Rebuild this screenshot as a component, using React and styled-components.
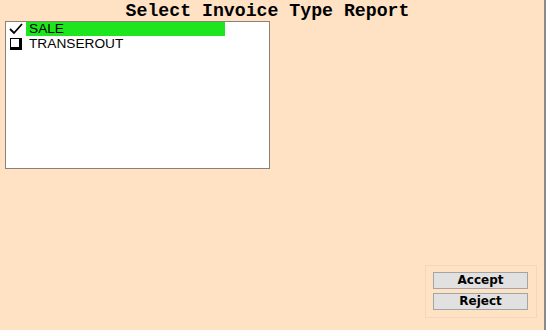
import React, { useState } from "react";
import styled, { createGlobalStyle } from "styled-components";

const GlobalStyle = createGlobalStyle`
  html, body {
    margin: 0;
    padding: 0;
    background: #ffe1c4;
  }
  #root {
    width: 546px;
    height: 330px;
  }
`;

const Page = styled.div`
  box-sizing: border-box;
  width: 546px;
  height: 330px;
  background: #ffe1c4;
  border-right: 2px solid #8a8a8a;
  display: flex;
  flex-direction: column;
`;

const Title = styled.h1`
  margin: 0;
  height: 21px;
  padding-right: 9px;
  text-align: center;
  font-family: "Liberation Mono", "Courier New", monospace;
  font-weight: bold;
  font-size: 18.2px;
  line-height: 22px;
  color: #000;
`;

const ListBox = styled.div`
  box-sizing: border-box;
  margin-left: 5px;
  width: 265px;
  height: 148px;
  background: #fff;
  border: 1px solid #8c7f74;
`;

const Row = styled.div`
  display: flex;
  align-items: center;
  height: 14px;
  margin-bottom: 1px;
  cursor: pointer;
`;

const Mark = styled.div`
  width: 20px;
  height: 14px;
  display: flex;
  align-items: center;
  justify-content: center;
`;

const Box = styled.span`
  box-sizing: border-box;
  display: block;
  width: 12px;
  height: 12px;
  border: 1px solid #000;
  border-right-width: 3px;
  border-bottom-width: 3px;
  margin-right: 1px;
`;

const Label = styled.span`
  box-sizing: border-box;
  width: 199px;
  height: 14px;
  padding-left: 3px;
  background: ${(p) => (p.$selected ? "#1ee61e" : "transparent")};
  font-family: "Liberation Sans", Arial, sans-serif;
  font-size: 13.7px;
  line-height: 14px;
  color: #000;
`;

const Spacer = styled.div`
  flex: 1;
`;

const Footer = styled.div`
  display: flex;
  justify-content: flex-end;
  padding: 0 7px 12px 0;
`;

const ButtonPanel = styled.div`
  box-sizing: border-box;
  width: 112px;
  height: 53px;
  border: 1px solid #f6d6b8;
  padding: 6px 8px 0 7px;
  display: flex;
  flex-direction: column;
  gap: 4px;
`;

const Button = styled.button`
  box-sizing: border-box;
  width: 95px;
  height: 17px;
  padding: 0;
  background: #e1e1e1;
  border: 1px solid #a4a4a4;
  font-family: "DejaVu Sans", Verdana, sans-serif;
  font-weight: bold;
  font-size: 12px;
  line-height: 15px;
  color: #000;
  cursor: pointer;
`;

const Check = () => (
  <svg width="14" height="12" viewBox="0 0 14 12">
    <path d="M1 6 L5 10 L13 1" fill="none" stroke="#000" strokeWidth="1.8" />
  </svg>
);

export default function App() {
  const [items, setItems] = useState([
    { id: 1, name: "SALE", checked: true },
    { id: 2, name: "TRANSEROUT", checked: false },
  ]);

  const toggle = (id) => {
    setItems(items.map((i) => (i.id === id ? { ...i, checked: !i.checked } : i)));
  };

  return (
    <>
      <GlobalStyle />
      <Page>
        <Title>Select Invoice Type Report</Title>
        <ListBox>
          {items.map((item) => (
            <Row key={item.id} onClick={() => toggle(item.id)}>
              <Mark>{item.checked ? <Check /> : <Box />}</Mark>
              <Label $selected={item.checked}>{item.name}</Label>
            </Row>
          ))}
        </ListBox>
        <Spacer />
        <Footer>
          <ButtonPanel>
            <Button>Accept</Button>
            <Button>Reject</Button>
          </ButtonPanel>
        </Footer>
      </Page>
    </>
  );
}
